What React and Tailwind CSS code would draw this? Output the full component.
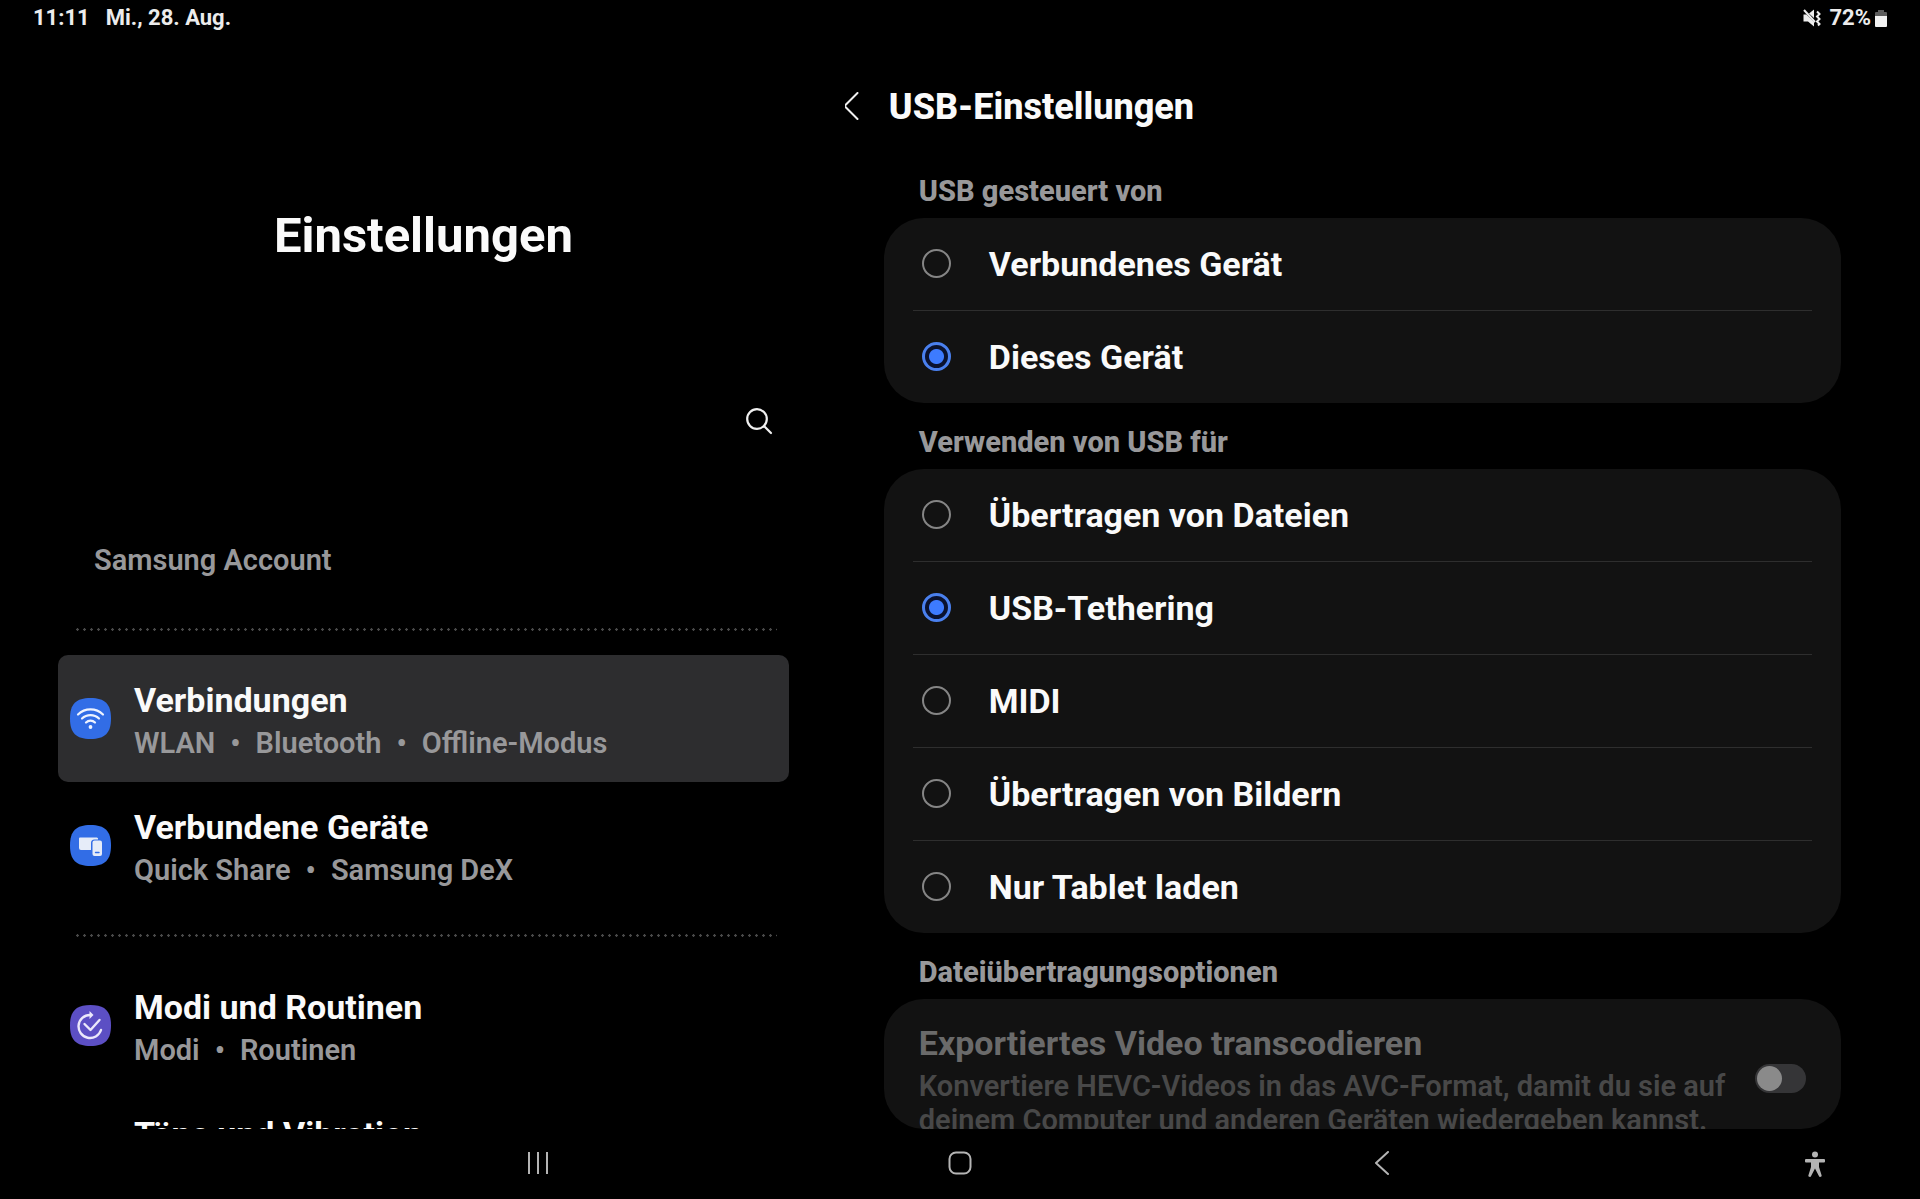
import clsx from "clsx";

const usbControllers = [
  { id: "connected", label: "Verbundenes Gerät" },
  { id: "this", label: "Dieses Gerät" },
];

const usbModes = [
  { id: "files", label: "Übertragen von Dateien" },
  { id: "tethering", label: "USB-Tethering" },
  { id: "midi", label: "MIDI" },
  { id: "images", label: "Übertragen von Bildern" },
  { id: "charge", label: "Nur Tablet laden" },
];

function StatusBar() {
  return (
    <header className="flex h-9 shrink-0 items-center justify-between pr-[33px] pl-[33px] text-[22px] leading-none font-bold text-[#ececec]">
      <div className="flex gap-4">
        <span>11:11</span>
        <span>Mi., 28. Aug.</span>
      </div>
      <div className="flex items-center">
        <svg viewBox="0 0 18 18" className="mr-2 h-[18px] w-[18px]" fill="none" aria-hidden="true">
          <path d="M0.500 5.500h3L11 13v4.500L5 12.500H0.500zM6 4.500 11 0.500V9z" fill="#ececec" />
          <path d="M1 1l11 12" stroke="#ececec" strokeWidth="2" />
          <path d="M14 2.500l2.500 2.500L14 7.500l2.500 2.500-2.500 2.500 2.500 2.500-1.500 1.500" stroke="#ececec" strokeWidth="2" />
        </svg>
        <span>72%</span>
        <svg viewBox="0 0 12 17" className="ml-1 h-[17px] w-3" aria-hidden="true">
          <path d="M3 0h6v2h2a1 1 0 0 1 1 1v4H0V3a1 1 0 0 1 1-1h2z" fill="#5c5c5c" />
          <path d="M0 6h12v10a1 1 0 0 1-1 1H1a1 1 0 0 1-1-1z" fill="#f2f2f2" />
        </svg>
      </div>
    </header>
  );
}

function WifiIcon() {
  return (
    <svg viewBox="0 0 41 41" className="h-[41px] w-[41px]" fill="none" aria-hidden="true">
      <path d="M20.500 0C35 0 41 6 41 20.500S35 41 20.500 41 0 35 0 20.500 6 0 20.500 0z" fill="#326de6" />
      <g stroke="#eef3ff" strokeWidth="2.200" strokeLinecap="round">
        <path d="M8 16.500a18 18 0 0 1 25 0" />
        <path d="M12 20.500a12.200 12.200 0 0 1 17 0" />
        <path d="M16 24.500a6.400 6.400 0 0 1 9 0" />
      </g>
      <circle cx="20.500" cy="29" r="1.900" fill="#eef3ff" />
    </svg>
  );
}

function DevicesIcon() {
  return (
    <svg viewBox="0 0 41 41" className="h-[41px] w-[41px]" aria-hidden="true">
      <path d="M20.500 0C35 0 41 6 41 20.500S35 41 20.500 41 0 35 0 20.500 6 0 20.500 0z" fill="#326de6" />
      <path d="M10 12.500h16.500a1.500 1.500 0 0 1 1.500 2h-3.500a3.500 3.500 0 0 0-3.500 3.500V25H11a2 2 0 0 1-2-2v-9.500a1 1 0 0 1 1-1z" fill="#e6ecf8" />
      <rect x="22.500" y="15.500" width="9.500" height="15.500" rx="2" fill="#e6ecf8" />
      <path d="M25.500 27.500h3.500" stroke="#326de6" strokeWidth="1.400" strokeLinecap="round" />
    </svg>
  );
}

function RoutinesIcon() {
  return (
    <svg viewBox="0 0 41 41" className="h-[41px] w-[41px]" fill="none" aria-hidden="true">
      <path d="M20.500 0C35 0 41 6 41 20.500S35 41 20.500 41 0 35 0 20.500 6 0 20.500 0z" fill="#5c4fc4" />
      <g stroke="#ebe8fb" strokeWidth="2.400" strokeLinecap="round" strokeLinejoin="round">
        <path d="M20 10a11.500 11.500 0 1 0 11 15" />
        <path d="M14.500 19l6 6 9-10" />
      </g>
      <path d="M19.500 6l4 4-4 4z" fill="#ebe8fb" />
    </svg>
  );
}

function DottedDivider({ className }) {
  return (
    <div
      className={clsx(
        "mr-3 ml-4 h-[3px] bg-[radial-gradient(circle,#4a4a4a_1px,transparent_1.5px)] bg-[length:7px_3px]",
        className
      )}
    />
  );
}

function MenuItem({ icon, title, details = [], active }) {
  return (
    <a
      href="#"
      aria-current={active ? "page" : undefined}
      className={clsx("flex h-[127px] items-center gap-[23px] rounded-[10px] px-3", active && "bg-[#2d2d2f]")}
    >
      <span className="h-[41px] w-[41px] shrink-0">{icon}</span>
      <span className="flex flex-col self-start pt-[23px]">
        <span className="text-[34px] leading-[44px] font-bold text-[#fafafa]">{title}</span>
        {details.length > 0 && (
          <span className="flex gap-[15px] text-[29px] leading-[42px] font-semibold text-[#98989a]">
            {details.map((detail, i) => (
              <span key={detail} className="flex gap-[15px]">
                {i > 0 && <span>•</span>}
                {detail}
              </span>
            ))}
          </span>
        )}
      </span>
    </a>
  );
}

function Sidebar() {
  return (
    <aside className="w-[44%] shrink-0 overflow-hidden pr-14 pl-[58px]">
      <h1 className="pt-[167px] text-center text-[49px] leading-[66px] font-bold text-[#fafafa]">Einstellungen</h1>
      <div className="flex justify-end pt-[132px] pr-2.5">
        <button type="button" aria-label="Suchen" className="flex h-10 w-10 items-center justify-center">
          <svg viewBox="0 0 28 28" className="h-7 w-7" fill="none" stroke="#f0f0f0" strokeWidth="2.200" strokeLinecap="round" aria-hidden="true">
            <circle cx="12" cy="12" r="9.800" />
            <path d="M19 19l7 7" />
          </svg>
        </button>
      </div>
      <a href="#" className="mt-[99px] ml-9 block text-[29px] leading-[40px] font-semibold text-[#98989a]">
        Samsung Account
      </a>
      <DottedDivider className="mt-[48px] mb-6" />
      <nav>
        <MenuItem icon={<WifiIcon />} title="Verbindungen" details={["WLAN", "Bluetooth", "Offline-Modus"]} active />
        <MenuItem icon={<DevicesIcon />} title="Verbundene Geräte" details={["Quick Share", "Samsung DeX"]} />
        <DottedDivider className="my-[25px]" />
        <MenuItem icon={<RoutinesIcon />} title="Modi und Routinen" details={["Modi", "Routinen"]} />
        <MenuItem title="Töne und Vibration" />
      </nav>
    </aside>
  );
}

function SectionTitle({ id, children }) {
  return (
    <h3 id={id} className="flex h-[66px] items-center pt-3 pl-[35px] text-[29px] leading-9 font-extrabold text-[#98989a]">
      {children}
    </h3>
  );
}

function RadioCard({ name, title, options, selected }) {
  return (
    <section>
      <SectionTitle id={name}>{title}</SectionTitle>
      <div
        role="radiogroup"
        aria-labelledby={name}
        className="divide-y divide-[#2e2e2e] rounded-[40px] bg-[#121212] px-[29px]"
      >
        {options.map((option) => (
          <label key={option.id} className="flex h-[93px] items-center gap-[38px] pb-0.5 pl-[9px] last:h-[92px]">
            <input
              type="radio"
              name={name}
              defaultChecked={option.id === selected}
              className="h-[29px] w-[29px] shrink-0 appearance-none rounded-full border-2 border-[#858585] checked:border-[3px] checked:border-[#4a80ee] checked:bg-[radial-gradient(circle,#3d7bff_7px,#0a1230_8px)]"
            />
            <span className="pt-0.5 text-[34px] leading-[44px] font-bold text-[#fafafa]">{option.label}</span>
          </label>
        ))}
      </div>
    </section>
  );
}

function UsbSettings() {
  return (
    <main className="min-w-0 flex-1 overflow-hidden pr-[79px] pl-[39px]">
      <div className="-ml-[43px] flex h-[116px] items-center gap-7 pt-[26px]">
        <button type="button" aria-label="Zurück" className="flex h-10 w-5 items-center justify-center pb-0.5">
          <svg viewBox="0 0 16 28" className="h-7 w-4" fill="none" stroke="#f0f0f0" strokeWidth="2" strokeLinecap="round" strokeLinejoin="round" aria-hidden="true">
            <path d="M14.500 1 1.500 14l13 13" />
          </svg>
        </button>
        <h2 className="text-[36px] leading-[48px] font-extrabold text-[#fafafa]">USB-Einstellungen</h2>
      </div>

      <RadioCard name="usb-controller" title="USB gesteuert von" options={usbControllers} selected="this" />
      <RadioCard name="usb-mode" title="Verwenden von USB für" options={usbModes} selected="tethering" />

      <section>
        <SectionTitle>Dateiübertragungsoptionen</SectionTitle>
        <div className="flex h-[130px] items-start justify-between overflow-hidden rounded-[40px] bg-[#121212] pt-5 pr-[35px] pl-[35px]">
          <label htmlFor="transcode" className="max-w-[820px]">
            <span className="block pb-0.5 text-[34px] leading-[48px] font-bold text-[#6a6a6a]">Exportiertes Video transcodieren</span>
            <span className="block text-[29px] leading-[34px] font-semibold text-[#484848]">
              Konvertiere HEVC-Videos in das AVC-Format, damit du sie auf deinem Computer und anderen Geräten wiedergeben kannst.
            </span>
          </label>
          <input
            id="transcode"
            type="checkbox"
            role="switch"
            disabled
            className="mt-[45px] h-[29px] w-[51px] shrink-0 appearance-none rounded-full bg-[#353537] p-[2px] before:block before:h-[25px] before:w-[25px] before:rounded-full before:bg-[#8a8a8a]"
          />
        </div>
      </section>
    </main>
  );
}

function NavigationBar() {
  return (
    <footer className="flex h-[70px] shrink-0 items-center pb-0.5 pl-[17%] text-[#b4b4b4]">
      <button type="button" aria-label="Letzte Apps" className="flex w-[26.5%] justify-center">
        <svg viewBox="0 0 24 24" className="h-6 w-6" fill="none" stroke="currentColor" strokeWidth="2" aria-hidden="true">
          <path d="M3 1v22M12 1v22M21 1v22" />
        </svg>
      </button>
      <button type="button" aria-label="Startseite" className="flex w-[26.5%] justify-center">
        <svg viewBox="0 0 24 24" className="h-6 w-6" fill="none" stroke="currentColor" strokeWidth="2" aria-hidden="true">
          <rect x="1.500" y="1.500" width="21" height="21" rx="6.500" />
        </svg>
      </button>
      <button type="button" aria-label="Zurück" className="flex w-[26.5%] justify-center">
        <svg viewBox="0 0 24 24" className="h-6 w-6" fill="none" stroke="currentColor" strokeWidth="2" strokeLinecap="round" strokeLinejoin="round" aria-hidden="true">
          <path d="M18 1 6 12l12 11" />
        </svg>
      </button>
      <button type="button" aria-label="Bedienungshilfe" className="ml-auto flex pt-0.5 pr-[94px]">
        <svg viewBox="0 0 22 26" className="h-[26px] w-[22px]" fill="currentColor" aria-hidden="true">
          <circle cx="11" cy="3.500" r="3" />
          <path d="M2 8h18a1 1 0 0 1 1 1v1.500a1 1 0 0 1-1 1h-5V16l2.500 8a1.300 1.300 0 0 1-2.600 1L11 17.500 7.100 25a1.300 1.300 0 0 1-2.600-1L7 16v-4.500H2a1 1 0 0 1-1-1V9a1 1 0 0 1 1-1z" />
        </svg>
      </button>
    </footer>
  );
}

export default function App() {
  return (
    <div className="flex h-screen flex-col overflow-hidden bg-black font-['Roboto',sans-serif]">
      <StatusBar />
      <div className="flex min-h-0 flex-1">
        <Sidebar />
        <UsbSettings />
      </div>
      <NavigationBar />
    </div>
  );
}
